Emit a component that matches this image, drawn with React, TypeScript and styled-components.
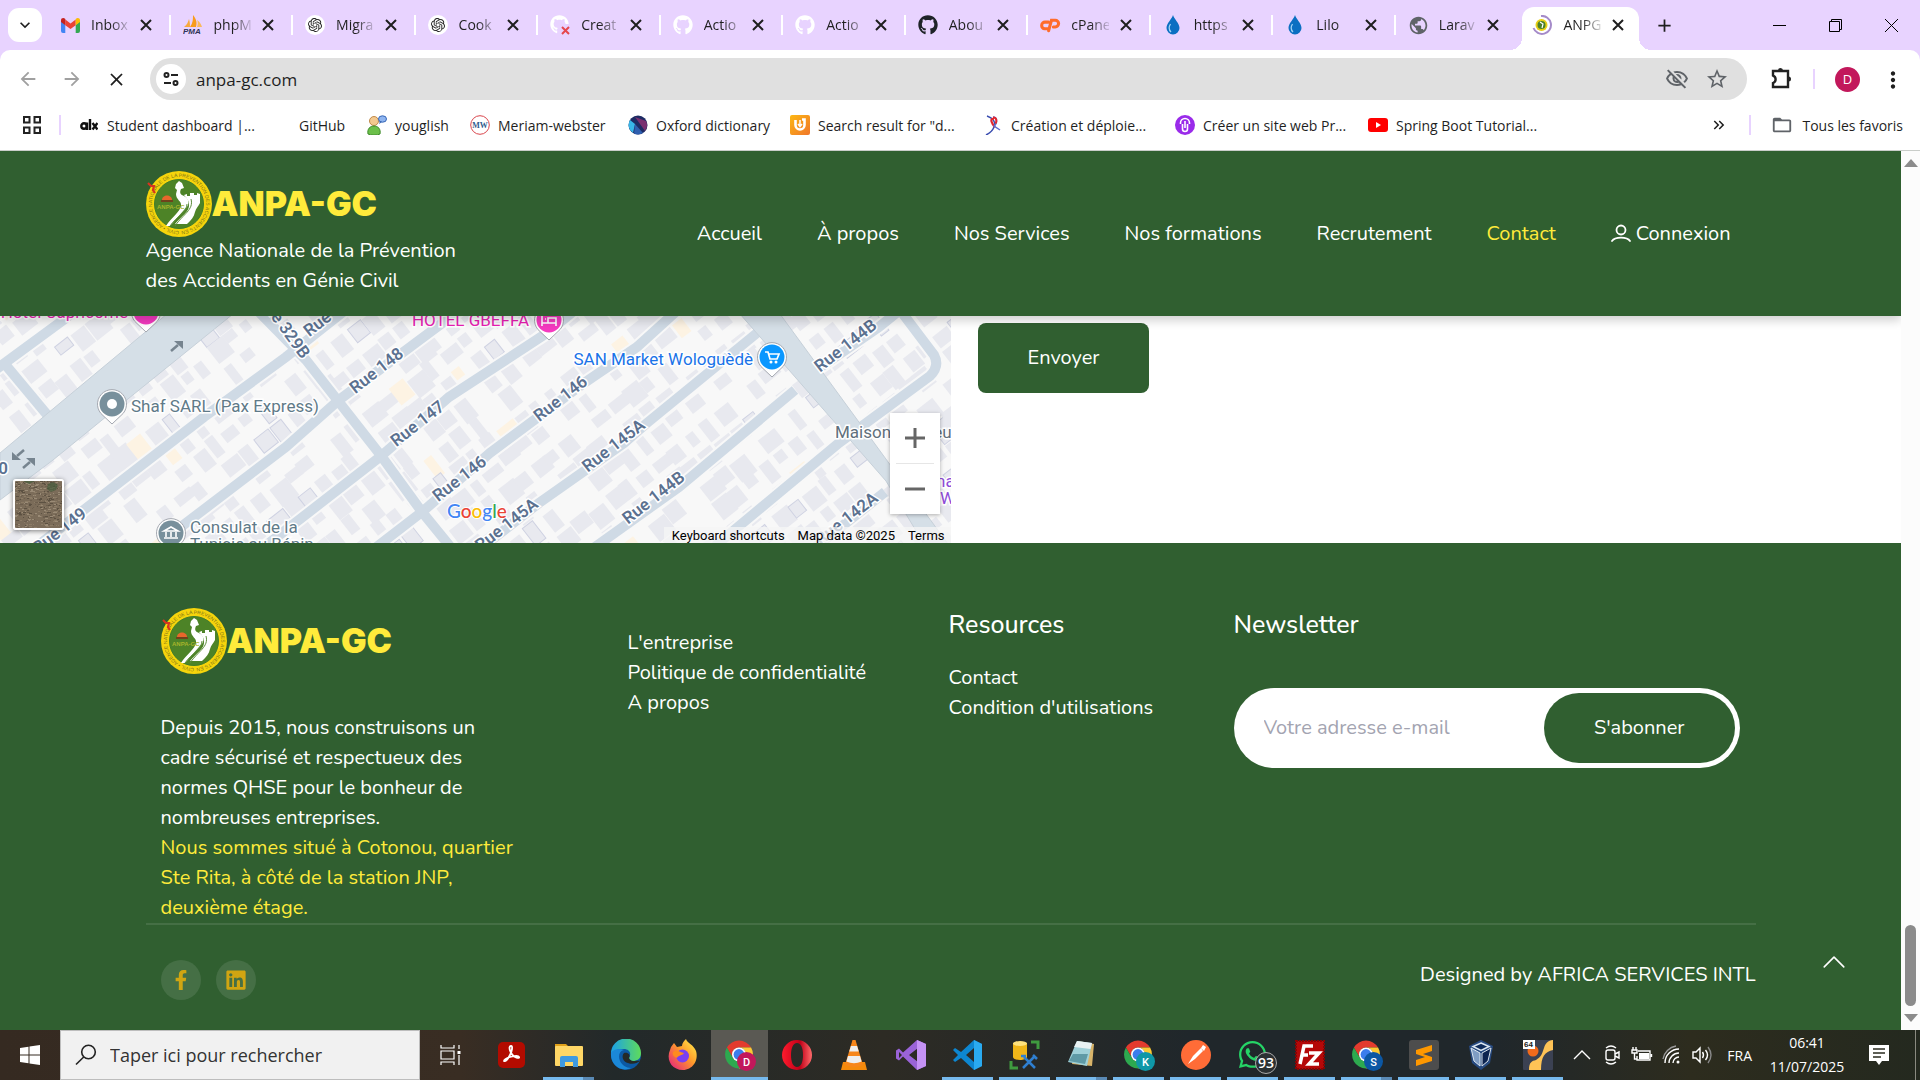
import React from "react";
import styled, { createGlobalStyle, css } from "styled-components";
import { FaGithub, FaFacebookF, FaLinkedin, FaWhatsapp } from "react-icons/fa";
import { SiOpenai } from "react-icons/si";
import { BsChevronUp } from "react-icons/bs";
import {
  MdClose,
  MdArrowBack,
  MdArrowForward,
  MdOutlineVisibilityOff,
  MdStarBorder,
  MdMoreVert,
  MdAdd,
  MdKeyboardArrowDown,
  MdPublic,
  MdFolderOpen,
  MdKeyboardDoubleArrowRight,
} from "react-icons/md";

const green = "#305f30";
const yellow = "#ffeb3b";
const lilac = "#e8d3ff";
const uiFont = `"Segoe UI", "Open Sans", "Noto Sans", sans-serif`;
const siteFont = `Nunito, Lato, "Open Sans", sans-serif`;

const GlobalStyle = createGlobalStyle`
  *, *::before, *::after { box-sizing: border-box; }
  body { margin: 0; background: #fff; }
  button, input { font: inherit; color: inherit; border: 0; background: none; padding: 0; margin: 0; }
  a { color: inherit; text-decoration: none; }
  ul { list-style: none; margin: 0; padding: 0; }
  p, h2 { margin: 0; }
  svg { display: block; flex: none; }
`;

const Screen = styled.div`
  display: flex;
  flex-direction: column;
  height: 100vh;
  overflow: hidden;
  font-family: ${uiFont};
  color: #1f1f1f;
`;

/* ---------- browser tabs ---------- */

const TabStrip = styled.div`
  display: flex;
  align-items: flex-end;
  height: 50px;
  padding-left: 8px;
  background: ${lilac};
`;

const TabSearch = styled.button`
  display: grid;
  flex: none;
  place-items: center;
  width: 34px;
  height: 34px;
  margin: 0 6px 8px 0;
  border-radius: 11px;
  background: #fff;
`;

const TabList = styled.div`
  display: flex;
  flex: 1;
  min-width: 0;
  height: 43px;
`;

const Tab = styled.div<{ $active?: boolean; $rule?: boolean }>`
  position: relative;
  display: flex;
  flex: 1 1 0;
  align-items: center;
  min-width: 0;
  padding: 0 18px 7px 12px;
  ${(p) =>
    p.$rule &&
    css`
      &::after {
        content: "";
        position: absolute;
        right: 0;
        top: 8px;
        width: 2px;
        height: 20px;
        background: #fff;
      }
    `}
  ${(p) =>
    p.$active &&
    css`
      margin: 0 4px;
      padding: 0 14px 7px 10px;
      border-radius: 12px 12px 0 0;
      background: #fff;
      &::before,
      &::after {
        content: "";
        position: absolute;
        bottom: 0;
        width: 12px;
        height: 12px;
      }
      &::before {
        left: -12px;
        background: radial-gradient(circle at 0 0, transparent 12px, #fff 12px);
      }
      &::after {
        right: -12px;
        background: radial-gradient(circle at 100% 0, transparent 12px, #fff 12px);
      }
    `}
`;

const TabTitle = styled.span`
  flex: 1;
  min-width: 0;
  margin: 0 10px 0 11px;
  font-size: 14px;
  line-height: 20px;
  white-space: nowrap;
  mask-image: linear-gradient(to right, #000 50%, rgba(0, 0, 0, 0.15));
`;

const IconButton = styled.button<{ $size?: number }>`
  display: grid;
  flex: none;
  place-items: center;
  width: ${(p) => p.$size ?? 14}px;
  height: ${(p) => p.$size ?? 14}px;
`;

const WindowButtons = styled.div`
  display: flex;
  flex: none;
  align-items: center;
  justify-content: space-between;
  width: 277px;
  height: 50px;
  padding: 0 22px 0 10px;
`;

const WindowGroup = styled.div`
  display: flex;
  gap: 42px;
`;

/* ---------- toolbar ---------- */

const Toolbar = styled.div`
  background: ${lilac};
`;

const ToolbarRow = styled.div`
  display: flex;
  align-items: center;
  height: 58px;
  padding: 0 16px;
  border-radius: 10px 10px 0 0;
  background: #fff;
`;

const NavButtons = styled.div`
  display: flex;
  gap: 20px;
  margin-right: 22px;
`;

const Omnibox = styled.div`
  display: flex;
  flex: 1;
  align-items: center;
  height: 42px;
  padding: 0 18px 0 6px;
  border-radius: 21px;
  background: #e0e0e0;
  color: #5f6368;
  gap: 16px;
`;

const SiteInfo = styled.button`
  display: grid;
  place-items: center;
  width: 30px;
  height: 30px;
  border-radius: 50%;
  background: #fff;
`;

const Address = styled.input`
  flex: 1;
  min-width: 0;
  margin-left: -6px;
  outline: 0;
  color: #1f1f1f;
  font-size: 17px;
`;

const ToolbarEnd = styled.div`
  display: flex;
  align-items: center;
  gap: 20px;
  margin-left: 22px;
`;

const Rule = styled.span`
  flex: none;
  width: 2px;
  height: 20px;
  background: ${lilac};
`;

const Avatar = styled.button`
  width: 25px;
  height: 25px;
  border-radius: 50%;
  background: #c2185b;
  color: #fff;
  font-size: 13px;
`;

const Bookmarks = styled.nav`
  display: flex;
  align-items: center;
  gap: 18px;
  height: 42px;
  padding: 0 17px 8px 23px;
  background: #fff;
  font-size: 14px;
  white-space: nowrap;
`;

const BookmarkList = styled.div`
  display: flex;
  flex: 1;
`;

const Bookmark = styled.a<{ $width: number }>`
  display: flex;
  align-items: center;
  gap: 8px;
  width: ${(p) => p.$width}px;
`;

const IconSlot = styled.span`
  display: grid;
  place-items: center;
  flex: none;
  width: 20px;
  height: 20px;
`;

const BookmarksEnd = styled.div`
  display: flex;
  align-items: center;
  gap: 20px;
`;

const AllBookmarks = styled.a`
  display: flex;
  align-items: center;
  gap: 9px;
`;

/* ---------- web page ---------- */

const Viewport = styled.div`
  display: flex;
  flex: 1;
  min-height: 0;
  border-top: 1px solid #c9cdc9;
`;

const Page = styled.div`
  display: flex;
  flex: 1;
  flex-direction: column;
  min-width: 0;
  overflow: hidden;
  background: #fff;
  font-family: ${siteFont};
  font-size: 20px;
  line-height: 30px;
`;

const Container = styled.div`
  width: min(1610px, 100% - 48px);
  margin: 0 auto;
`;

const SiteHeader = styled.header`
  position: relative;
  z-index: 1;
  padding: 20px 0;
  background: ${green};
  color: #fff;
  box-shadow: 0 4px 10px rgba(0, 0, 0, 0.2);
`;

const HeaderRow = styled(Container)`
  display: flex;
  align-items: center;
  justify-content: space-between;
`;

const LogoLink = styled.a`
  display: flex;
  align-items: center;
  height: 65px;
`;

const LogoText = styled.span`
  color: ${yellow};
  font-family: Inter, "Liberation Sans", sans-serif;
  font-size: 34px;
  font-weight: 900;
`;

const Menu = styled.ul`
  display: flex;
  gap: 55px;
  padding-right: 25px;
`;

const MenuLink = styled.a<{ $active?: boolean }>`
  display: flex;
  align-items: center;
  gap: 5px;
  color: ${(p) => (p.$active ? yellow : "#fff")};
`;

const Split = styled.main`
  display: grid;
  grid-template-columns: 1fr 1fr;
`;

const MapPane = styled.section`
  position: relative;
  height: 227px;
  overflow: hidden;
  background: #f8f8f8;
  font-family: Roboto, sans-serif;
`;

const ZoomBox = styled.div`
  position: absolute;
  right: 11px;
  top: 97px;
  display: flex;
  flex-direction: column;
  width: 50px;
  background: #fff;
  box-shadow: 0 1px 4px rgba(0, 0, 0, 0.3);
`;

const ZoomButton = styled.button`
  display: grid;
  place-items: center;
  height: 50px;
  color: #666;
  & + & {
    height: 51px;
    background: linear-gradient(#e6e6e6, #e6e6e6) center top / 38px 1px no-repeat;
  }
`;

const Satellite = styled.button`
  position: absolute;
  left: 13px;
  top: 163px;
  width: 51px;
  height: 51px;
  overflow: hidden;
  border: 2px solid #fff;
  border-radius: 3px;
  box-shadow: 0 1px 5px rgba(0, 0, 0, 0.5);
`;

const Attribution = styled.div`
  position: absolute;
  right: 0;
  bottom: 0;
  display: flex;
  gap: 13px;
  height: 16px;
  padding: 0 6px 0 8px;
  background: rgba(245, 245, 245, 0.75);
  color: #000;
  font-size: 13px;
  line-height: 17px;
`;

const FormPane = styled.form`
  padding: 7px 27px;
`;

const SolidButton = styled.button<{ $pill?: boolean }>`
  height: 70px;
  padding: 0 50px;
  border-radius: ${(p) => (p.$pill ? 35 : 8)}px;
  background: ${green};
  color: #fff;
`;

const Footer = styled.footer`
  flex: 1;
  padding-top: 65px;
  background: ${green};
  color: #fff;
`;

const FooterGrid = styled(Container)`
  display: grid;
  grid-template-columns: 467fr 321fr 285fr 506fr;
  padding: 0 16px 0 15px;
  border-bottom: 2px solid #456f45;
`;

const About = styled.div`
  max-width: 360px;
`;

const AboutText = styled.p`
  margin-top: 40px;
`;

const Highlight = styled.p`
  color: ${yellow};
`;

const LinkColumn = styled.ul<{ $top: number }>`
  padding-top: ${(p) => p.$top}px;
`;

const Heading = styled.h2`
  margin-top: 2px;
  font-size: 25px;
  font-weight: 500;
  line-height: 30px;
`;

const Subscribe = styled.form`
  display: flex;
  align-items: center;
  height: 80px;
  margin-top: 48px;
  padding: 0 5px 0 30px;
  border-radius: 40px;
  background: #fff;
`;

const EmailInput = styled.input`
  flex: 1;
  min-width: 0;
  outline: 0;
  color: #333;
  &::placeholder {
    color: #a3a4b1;
    opacity: 1;
  }
`;

const FooterEnd = styled(Container)`
  display: flex;
  justify-content: space-between;
  padding: 35px 0 0 15px;
`;

const Social = styled.div`
  display: flex;
  gap: 15px;
`;

const SocialLink = styled.a`
  display: grid;
  place-items: center;
  width: 40px;
  height: 40px;
  border-radius: 50%;
  background: #456f45;
  color: #d0a512;
`;

const BackToTop = styled.button`
  position: fixed;
  right: 73px;
  bottom: 105px;
  color: #fff;
`;

const ScrollTrack = styled.div`
  display: flex;
  flex-direction: column;
  align-items: center;
  justify-content: space-between;
  width: 19px;
  padding: 8px 0;
  background: #fcfcfc;
  color: #8b8b8b;
`;

const ScrollEnd = styled.div`
  display: flex;
  flex-direction: column;
  align-items: center;
  gap: 8px;
`;

const Thumb = styled.div`
  width: 11px;
  height: 81px;
  border-radius: 6px;
  background: #8b8b8b;
`;

/* ---------- taskbar ---------- */

const Taskbar = styled.div`
  display: flex;
  align-items: stretch;
  height: 50px;
  background: linear-gradient(90deg, #352a21 0%, #392d23 24%, #22292a 32%, #2d2b24 46%, #20272b 62%, #20272b 78%, #2d2c1e 88%, #24291f 100%);
  color: #fff;
`;

const StartButton = styled.button`
  display: grid;
  place-items: center;
  width: 60px;
`;

const SearchBox = styled.label`
  display: flex;
  align-items: center;
  gap: 13px;
  width: 360px;
  padding-left: 14px;
  border: 1px solid #bdbdbd;
  background: #f1f1f1;
  color: #222;
`;

const SearchInput = styled.input`
  width: 300px;
  outline: 0;
  font-size: 18px;
  &::placeholder {
    color: #333;
    opacity: 1;
  }
`;

const TaskView = styled.button`
  display: grid;
  place-items: center;
  width: 63px;
  padding-right: 3px;
`;

const Apps = styled.div`
  display: flex;
  flex: 1;
`;

const AppButton = styled.button<{ $active?: boolean; $open?: boolean; $many?: boolean }>`
  display: grid;
  place-items: center;
  width: 57px;
  background: ${(p) => (p.$active ? "#5a5953" : "transparent")};
  border-bottom: 3px solid transparent;
  border-top: 3px solid transparent;
  background-clip: border-box;
  ${(p) =>
    p.$open &&
    css`
      border-image: linear-gradient(
          90deg,
          transparent ${p.$active ? 0 : 10}%,
          #76b9ed ${p.$active ? 0 : 10}%,
          #76b9ed ${p.$many ? 72 : p.$active ? 100 : 90}%,
          ${p.$many ? "#5a8ab5" : "transparent"} ${p.$many ? 72 : p.$active ? 100 : 90}%,
          ${p.$many ? "#5a8ab5" : "transparent"} 90%,
          transparent ${p.$active ? 100 : 90}%
        )
        3;
      border-top-width: 0;
      padding-top: 3px;
    `}
`;

const Tray = styled.div`
  display: flex;
  align-items: center;
  font-size: 14px;
`;

const TrayIcons = styled.div`
  display: flex;
  align-items: center;
  gap: 8px;
  margin-right: 14px;
`;

const Language = styled.button`
  margin-right: 8px;
`;

const Clock = styled.time`
  width: 94px;
  line-height: 24px;
  text-align: center;
`;

const Notice = styled.button`
  display: grid;
  place-items: center;
  width: 50px;
  height: 50px;
  margin-right: 11px;
`;

const DesktopEdge = styled.span`
  width: 5px;
  height: 50px;
  border-left: 1px solid #8a8a80;
`;

/* ---------- small drawings ---------- */

const Gmail = () => (
  <svg width="19" height="15" viewBox="0 0 19 15">
    <path d="M0 2v11a2 2 0 0 0 2 2h2.300V7L0 3z" fill="#4285f4" />
    <path d="M19 2v11a2 2 0 0 1-2 2h-2.300V7L19 3z" fill="#34a853" />
    <path d="M4.300 1.500v5.700L9.500 11l5.200-3.800V1.500L9.500 5.400z" fill="#ea4335" />
    <path d="M0 2.500C0 0 2.500-.6 4.300.900v6.300L0 4z" fill="#c5221f" />
    <path d="M19 2.500C19 0 16.500-.6 14.700.900v6.300L19 4z" fill="#fbbc04" />
  </svg>
);

const PhpMyAdmin = () => (
  <svg width="20" height="20" viewBox="0 0 20 20">
    <path d="M1 12C4 10 5 7 6 4c1 4 1 5 1 8z" fill="#f7a93b" />
    <path d="M7 12C10 8 10 4 10 0c4 5 4 8 3 12z" fill="#f89c1c" />
    <path d="M14 12c1-3 1-5 0-7 3 2 4 4 5 7z" fill="#fbb95b" />
    <text x="0" y="19" fontSize="8" fontWeight="700" fontStyle="italic" fontFamily="Liberation Sans, sans-serif" fill="#2e3357">PMA</text>
  </svg>
);

const OpenAiBadge = () => (
  <svg width="20" height="20" viewBox="0 0 20 20">
    <circle cx="10" cy="10" r="10" fill="#fff" />
    <g transform="translate(3 3)"><SiOpenai size={14} color="#222" /></g>
  </svg>
);

const CPanel = () => (
  <svg width="21" height="16" viewBox="0 0 22 16" fill="none" stroke="#ff6c2c" strokeWidth="3.200" strokeLinecap="round">
    <path d="M9 5H5.500a3.500 3.500 0 0 0-.5 7H8" />
    <path d="M9 14L12 3h4a3.500 3.500 0 0 1 0 7h-2" />
  </svg>
);

const FailedGithub = () => (
  <svg width="20" height="20" viewBox="0 0 20 20">
    <FaGithub size={19} color="#fff" />
    <path d="M10 9h10v11H10z" fill={lilac} />
    <path d="M12 12l7 7M19 12l-7 7" stroke="#e5484d" strokeWidth="2" />
  </svg>
);

const Drop = () => (
  <svg width="14" height="20" viewBox="0 0 14 20">
    <path d="M7 0c1 4 6.500 8 6.500 13a6.500 6.500 0 0 1-13 0C.5 8 6 4 7 0z" fill="#0b6fc2" />
    <path d="M4.500 9C2.500 12 3 15 5 17" fill="none" stroke="#9fd2f5" strokeWidth="1.300" />
  </svg>
);

const Seal = () => (
  <svg width="66" height="66" viewBox="0 0 66 66">
    <defs>
      <path id="sealRing" d="M33 60A27 27 0 1 1 33.100 60" />
    </defs>
    <circle cx="33" cy="33" r="33" fill="#f6d40c" />
    <circle cx="33" cy="33" r="24.500" fill="#4d8327" stroke="#3f7d2a" strokeWidth="1" />
    <text fontSize="5" fontFamily="Liberation Sans, sans-serif" fill="#7d7419">
      <textPath href="#sealRing">CIVIL • AGENCE NATIONALE DE LA PREVENTION DES ACCIDENTS EN GENIE</textPath>
    </text>
    <path d="M29 17l1-4 3-3 3 2 2 5-3 1c-2 4 0 6 3 7 6 3 6 9 0 14L24 55h-4c5-8 14-14 15-20 1-5-5-6-5-12l1-4z" fill="#fff" />
    <path d="M38 24l3-1v2h3v-3h4v2h3v-2l3 1v9c-2 4-4 5-5 9-1 5-4 8-8 12H29c6-8 15-12 14-20 0-4-3-6-5-9z" fill="#fff" />
    <path d="M45 28c3 11-8 15-16 27M41 33c0 8-11 13-17 22" fill="none" stroke="#5c8d3b" strokeWidth="1" />
    <path d="M16 29c0-6 10-6 10 0z" fill="#e8672b" />
    <path d="M15 30h12" stroke="#7b2e19" strokeWidth="1.500" />
    <text x="11" y="38" fontSize="6" fontWeight="700" fontFamily="Liberation Sans, sans-serif" fill="#a6b32b">ANPA-GC</text>
    <path d="M2 12l3 3 3 0-1 4 2 3M5 15l3 0" fill="none" stroke="#d9331f" strokeWidth="2.200" />
  </svg>
);

const SiteLoader = () => (
  <svg width="20" height="20" viewBox="0 0 20 20">
    <path d="M9 1a9 9 0 1 1-7.500 12" fill="none" stroke="#a58bc9" strokeWidth="2" />
    <circle cx="9.500" cy="10" r="6" fill="#e8cf16" />
    <circle cx="9.500" cy="10" r="4" fill="#4c7f2a" />
    <path d="M8 7l3 2-1 4" fill="none" stroke="#fff" strokeWidth="1.200" />
  </svg>
);

const Person = () => (
  <svg width="20" height="20" viewBox="0 0 20 20" fill="none" stroke="currentColor" strokeWidth="1.800" strokeLinecap="round">
    <circle cx="10" cy="6" r="4.500" />
    <path d="M1 17C4 12.500 16 12.500 19 17" />
  </svg>
);

const Puzzle = () => (
  <svg width="24" height="24" viewBox="0 0 24 24" fill="none" stroke="#222" strokeWidth="2.400">
    <path d="M4 4H19V20H4V16A4 4 0 0 0 4 8.500Z" />
    <path d="M9 3.500a2.500 2.500 0 0 1 5 0zM19.500 9.500a2.500 2.500 0 0 1 0 5z" fill="#222" stroke="none" />
  </svg>
);

const Tune = () => (
  <svg width="16" height="16" viewBox="0 0 16 16" fill="none" stroke="#222" strokeWidth="2">
    <circle cx="3.500" cy="4" r="2" />
    <path d="M8 4h7M1 12h7" />
    <circle cx="12.500" cy="12" r="2" />
  </svg>
);

const AppsGrid = () => (
  <svg width="18" height="18" viewBox="0 0 18 18" fill="none" stroke="#222" strokeWidth="2">
    <path d="M1 1h5.500v5.500H1zM11.500 1H17v5.500h-5.500zM1 11.500h5.500V17H1zM11.500 11.500H17V17h-5.500z" />
  </svg>
);

const CloseTab = () => (
  <svg width="12" height="12" viewBox="0 0 12 12"><path d="M1 1l10 10M11 1L1 11" stroke="#1f1f1f" strokeWidth="2" /></svg>
);
const Minimize = () => (
  <svg width="13" height="13" viewBox="0 0 13 13"><path d="M0 6.500h13" stroke="#000" /></svg>
);
const Restore = () => (
  <svg width="13" height="13" viewBox="0 0 13 13" fill="none" stroke="#000">
    <path d="M.5 2.500h10v10H.5zM2.500 2.500V.5h10v10h-2" />
  </svg>
);
const CloseWindow = () => (
  <svg width="13" height="13" viewBox="0 0 13 13"><path d="M0 0l13 13M13 0L0 13" stroke="#000" /></svg>
);

const Alx = () => (
  <svg width="18" height="12" viewBox="0 0 18 12" fill="none" stroke="#111" strokeWidth="2.400">
    <circle cx="4" cy="7" r="2.700" />
    <path d="M7 3.500V11M10 0v11M12.500 4l5 6.500M17.500 4l-5 6.500" />
  </svg>
);
const Youglish = () => (
  <svg width="20" height="20" viewBox="0 0 20 20">
    <circle cx="7" cy="6" r="4.500" fill="#f3c98f" stroke="#c08a4b" />
    <path d="M1 19c-1-5 2-8 6-8s7 3 6 8c-3 1.500-9 1.500-12 0z" fill="#6cc04a" stroke="#3f8a2c" />
    <ellipse cx="15.500" cy="4" rx="4" ry="3.200" fill="#8fb5f0" stroke="#3867b5" />
    <path d="M13 6l-1 3 3-2z" fill="#3867b5" />
  </svg>
);
const Webster = () => (
  <svg width="20" height="20" viewBox="0 0 20 20">
    <circle cx="10" cy="10" r="9.300" fill="#fff" stroke="#d9454c" />
    <text x="10" y="13" textAnchor="middle" fontSize="8" fontWeight="700" fontFamily="Liberation Serif, serif" fill="#2f5b8c">MW</text>
  </svg>
);
const Oxford = () => (
  <svg width="20" height="20" viewBox="0 0 20 20">
    <circle cx="10" cy="10" r="9.500" fill="#1d2b63" />
    <path d="M2 5a9.500 9.500 0 0 0 3 13L7 9z" fill="#38b6e8" />
    <path d="M7 2l11 4a9.500 9.500 0 0 1-1 10z" fill="#7a2f70" />
    <path d="M7 9l8 9a9.500 9.500 0 0 1-9 .5z" fill="#2f5fb0" />
  </svg>
);
const SearchResult = () => (
  <svg width="20" height="20" viewBox="0 0 20 20">
    <defs><linearGradient id="srg" x1="0" y1="0" x2="1" y2="1"><stop offset="0" stopColor="#fdb813" /><stop offset="1" stopColor="#f0762a" /></linearGradient></defs>
    <rect width="20" height="20" rx="2" fill="url(#srg)" />
    <path d="M5.500 5v5a4.500 4.500 0 0 0 9 0V4.500h-2.500" fill="none" stroke="#fff" strokeWidth="2.600" />
    <path d="M10 5v6M8 9l2 2.500L12 9" fill="none" stroke="#fff" strokeWidth="1.500" />
  </svg>
);
const Ribbon = () => (
  <svg width="16" height="20" viewBox="0 0 16 20">
    <path d="M2 1C8 3 11 7 9 12C8 15 5 18 1 20" fill="none" stroke="#3a4db0" strokeWidth="1.500" />
    <path d="M9 4C4 3 7 9 10 12" fill="none" stroke="#e3262e" strokeWidth="2.200" />
    <path d="M8 2c5 0 4 7 1 9l6 4" fill="none" stroke="#5a6bd0" strokeWidth="1.500" />
    <path d="M8 2.500c4 0 4 4 2.500 6" fill="none" stroke="#e3262e" strokeWidth="2" />
  </svg>
);
const Purple = () => (
  <svg width="20" height="20" viewBox="0 0 20 20">
    <circle cx="10" cy="10" r="10" fill="#9a2bea" />
    <path d="M5.500 9V8a4.500 4.500 0 0 1 9 0v1M7.500 9v5a2.500 2.500 0 0 0 5 0V9M10 6v7" fill="none" stroke="#fff" strokeWidth="1.600" />
  </svg>
);
const Youtube = () => (
  <svg width="20" height="14" viewBox="0 0 20 14">
    <rect width="20" height="14" rx="3" fill="#f00" />
    <path d="M8 4l5 3-5 3z" fill="#fff" />
  </svg>
);

/* ---------- map ---------- */

function makeRandom(start: number) {
  let seed = start;
  return () => {
    seed = (seed * 1103515245 + 12345) % 2147483648;
    return seed / 2147483648;
  };
}

type Building = { x: number; y: number; w: number; h: number; t: number };

function makeBuildings(): Building[] {
  const rnd = makeRandom(41);
  const list: Building[] = [];
  for (let v = -40; v < 820; v += 24) {
    for (let u = -200; u < 800; u += 20) {
      if (rnd() < 0.17) continue;
      list.push({ x: u + rnd() * 6, y: v + rnd() * 7, w: 9 + rnd() * 12, h: 10 + rnd() * 13, t: rnd() });
    }
  }
  return list;
}
const buildings = makeBuildings();

const roads = [
  "M-6 55L66 2L80-10",
  "M4 47L49 101",
  "M32 234L204 101L286 41L348-8",
  "M165 223L286 131L339 84L433 14L460-6",
  "M255 238L380 141L449 81L547 17L575-6",
  "M370 236L422 196L490 137L584 67L637 31L680-8",
  "M476 236L539 187L624 127L647 107L757 17",
  "M588 236L679 171L795 74",
  "M805 62L879 11L905-10",
  "M715 230L839 127L930 60Q940 50 934 39L900-6",
  "M812 234L885 176",
  "M255-8L306 44L382 141L422 196L453 234",
];

const streets: [string, number, number, number][] = [
  ["Rue 329B", 280, 14, 54],
  ["Rue 148", 334, 2, -38],
  ["Rue 148", 380, 59, -38],
  ["Rue 147", 421, 112, -38],
  ["Rue 146", 564, 87, -38],
  ["Rue 146", 463, 167, -38],
  ["Rue 145A", 617, 134, -38],
  ["Rue 145A", 510, 213, -38],
  ["Rue 144B", 657, 186, -38],
  ["Rue 144B", 849, 34, -38],
  ["Rue 142A", 850, 207, -38],
  ["Rue 149", 63, 219, -38],
];

const StreetLabel = styled.text`
  fill: #5b7190;
  stroke: #fff;
  stroke-width: 3px;
  paint-order: stroke;
  font-size: 17px;
  font-weight: 600;
  text-anchor: middle;
`;

const PlaceLabel = styled.text<{ $color: string }>`
  fill: ${(p) => p.$color};
  stroke: #fff;
  stroke-width: 3px;
  paint-order: stroke;
  font-size: 17px;
`;

const Pin = ({ x, y, color, children }: { x: number; y: number; color: string; children?: React.ReactNode }) => (
  <g transform={`translate(${x} ${y})`}>
    <path d="M0 20L-9 11.500A14.500 14.500 0 1 1 9 11.500Z" fill="#fff" stroke="#a4a8b0" strokeWidth="1" />
    <circle r="12.500" fill={color} />
    {children}
  </g>
);

const MapArrow = ({ x, y, flip }: { x: number; y: number; flip?: boolean }) => (
  <g transform={`translate(${x} ${y}) rotate(${flip ? 180 : 0})`} fill="#76848f">
    <path d="M-6 5L1-1" stroke="#76848f" strokeWidth="2.500" />
    <path d="M-3-5H6V3Z" />
  </g>
);

const CityMap = () => (
  <svg width="100%" height="227" viewBox="0 0 951 227" preserveAspectRatio="xMinYMin slice" role="img" aria-label="Carte de Cotonou">
    <rect width="1200" height="227" fill="#f8f8f8" />
    <g transform="rotate(-38)">
      {buildings.map((b, i) => (
        <rect
          key={i}
          x={b.x}
          y={b.y}
          width={b.w}
          height={b.h}
          fill={b.t > 0.97 ? "#fdf3e3" : "#e8e9ef"}
          stroke={b.t < 0.06 ? "#cfd2e2" : "none"}
        />
      ))}
    </g>
    <g fill="none" stroke="#f8f8f8" strokeWidth="14">{roads.map((d) => <path key={d} d={d} />)}</g>
    <g fill="none" stroke="#cfdae5" strokeWidth="10">{roads.map((d) => <path key={d} d={d} />)}</g>
    <path d="M167-2L0 137V184L53 144L118 91L233-2Z" fill="#d5dfe7" stroke="#c6d0d9" />
    <path d="M740-2H780L948 228H924L886 165Z" fill="#d5dfe7" stroke="#c6d0d9" />
    <MapArrow x={177} y={30} />
    <MapArrow x={18} y={139} flip />
    <MapArrow x={29} y={147} />
    {streets.map(([name, x, y, angle], i) => (
      <StreetLabel key={i} transform={`translate(${x} ${y}) rotate(${angle})`}>{name}</StreetLabel>
    ))}
    <StreetLabel x="3" y="158">0</StreetLabel>
    <PlaceLabel $color="#e91eb4" x="128" y="2" textAnchor="end">Hotel Capricorne</PlaceLabel>
    <Pin x={146} y={-4} color="#f53ac0" />
    <PlaceLabel $color="#e91eb4" x="529" y="10" textAnchor="end">HOTEL GBEFFA</PlaceLabel>
    <Pin x={549} y={4} color="#f53ac0">
      <path d="M-7-5V6M-7 3H7V6M7 3V-2H-1V3M-4-1h1" stroke="#fff" strokeWidth="1.600" fill="none" />
    </Pin>
    <PlaceLabel $color="#1a73e8" x="753" y="49" textAnchor="end">SAN Market Wologuèdè</PlaceLabel>
    <Pin x={772} y={41} color="#0a97ff">
      <path d="M-7-5h3l2 7h7l2-5H-3" stroke="#fff" strokeWidth="1.700" fill="none" />
      <circle cx="-1" cy="5" r="1.500" fill="#fff" />
      <circle cx="4" cy="5" r="1.500" fill="#fff" />
    </Pin>
    <PlaceLabel $color="#5f7a88" x="131" y="96">Shaf SARL (Pax Express)</PlaceLabel>
    <Pin x={112} y={88} color="#78909c"><circle r="5" fill="#fff" /></Pin>
    <PlaceLabel $color="#5f7a88" x="190" y="217">Consulat de la</PlaceLabel>
    <PlaceLabel $color="#5f7a88" x="190" y="234">Tunisie au Bénin</PlaceLabel>
    <Pin x={171} y={217} color="#78909c">
      <path d="M-7-2L0-6L7-2ZM-7 5H7M-5-1V4M0-1V4M5-1V4" stroke="#fff" strokeWidth="1.600" fill="none" />
    </Pin>
    <PlaceLabel $color="#5f6f7c" x="835" y="122">Maison du Bleu</PlaceLabel>
    <PlaceLabel $color="#8e4bd8" x="936" y="171">na</PlaceLabel>
    <PlaceLabel $color="#8e4bd8" x="940" y="188">W</PlaceLabel>
    <text x="447" y="202" fontSize="19" fontWeight="500" fontFamily="Lato, sans-serif" stroke="#fff" strokeWidth="2" paintOrder="stroke">
      <tspan fill="#4285f4">G</tspan><tspan fill="#ea4335">o</tspan><tspan fill="#fbbc04">o</tspan><tspan fill="#4285f4">g</tspan><tspan fill="#34a853">l</tspan><tspan fill="#ea4335">e</tspan>
    </text>
  </svg>
);

function makeSoil() {
  const rnd = makeRandom(7);
  const tones = ["#6d5f4e", "#9a8b76", "#7d6e5b", "#5c5142", "#8c7c66"];
  return Array.from({ length: 520 }, () => ({
    x: Math.floor(rnd() * 47),
    y: Math.floor(rnd() * 47),
    w: 1 + Math.floor(rnd() * 3),
    fill: tones[Math.floor(rnd() * tones.length)],
  }));
}
const soil = makeSoil();

const Ground = () => (
  <svg width="47" height="47" viewBox="0 0 47 47">
    <rect width="47" height="47" fill="#7b6c59" />
    {soil.map((s, i) => <rect key={i} x={s.x} y={s.y} width={s.w} height="1" fill={s.fill} />)}
    <path d="M33 3l5-2 5 3-2 5-5 2-4-3zM8 0h12l-6 3z" fill="#435a3a" opacity=".7" />
  </svg>
);

/* ---------- taskbar drawings ---------- */

const Glyph = ({ children }: { children: React.ReactNode }) => (
  <svg width="32" height="32" viewBox="0 0 32 32">{children}</svg>
);

const Chrome = ({ badge, color }: { badge: string; color: string }) => (
  <Glyph>
    <path d="M2.900 8.500A14 14 0 0 1 27.100 8.500H15A7 7 0 0 0 8.940 19Z" fill="#e33b2e" />
    <path d="M27.100 8.500A14 14 0 0 1 15 29.500L21.060 19A7 7 0 0 0 15 8.500Z" fill="#fcc934" />
    <path d="M2.900 8.500A14 14 0 0 0 15 29.500L21.060 19A7 7 0 0 1 8.940 19Z" fill="#2da94f" />
    <circle cx="15" cy="15.500" r="7" fill="#fff" />
    <circle cx="15" cy="15.500" r="5.400" fill="#3b7ded" />
    <circle cx="22.500" cy="22.500" r="9.500" fill={color} />
    <text x="22.500" y="26.500" textAnchor="middle" fontSize="11" fontFamily="Roboto, sans-serif" fontWeight="500" fill="#fff">{badge}</text>
  </Glyph>
);

const Acrobat = () => (
  <Glyph>
    <rect x="2" y="3" width="27" height="26" rx="5" fill="#b30b00" />
    <path d="M8 22c0-3 14-7 15-4 1 2-5 1-8-4-2-4-2-7 0-7s1 5-1 9-4 7-6 6z" fill="none" stroke="#fff" strokeWidth="1.800" />
  </Glyph>
);
const Explorer = () => (
  <Glyph>
    <path d="M2 5h11l3 3H2z" fill="#e0a11b" />
    <rect x="2" y="7" width="28" height="20" rx="1" fill="#ffd766" />
    <path d="M7 28V19a2 2 0 0 1 2-2h14a2 2 0 0 1 2 2v9h-5v-5h-8v5z" fill="#3f9ae0" />
  </Glyph>
);
const Edge = () => (
  <Glyph>
    <defs><linearGradient id="edg" x1="0" y1="0" x2="1" y2="0"><stop offset="0" stopColor="#1aa0e8" /><stop offset="1" stopColor="#5fdc5a" /></linearGradient></defs>
    <circle cx="16" cy="16" r="15" fill="#0c59a4" />
    <path d="M1 15A15 15 0 0 1 31 14c0 6-4 8-8 8-3 0-5-1-4-3 3-5 0-9-5-9C8 10 2 12 1 15z" fill="url(#edg)" />
    <path d="M1 14c2-4 9-5 13-3-5 1-6 6-4 11 2 4 6 7 11 7C10 34 0 25 1 14z" fill="#1b88d8" />
    <path d="M14 14c-3 3-1 9 4 10 5 2 9 0 12-2-2-1-9 2-11-3 2-3-1-6-5-5z" fill="#252a28" />
  </Glyph>
);
const Firefox = () => (
  <Glyph>
    <defs><linearGradient id="ffx" x1="1" y1="0" x2="0" y2="1"><stop offset="0" stopColor="#fff44f" /><stop offset=".45" stopColor="#ff9a2a" /><stop offset="1" stopColor="#e31587" /></linearGradient></defs>
    <path d="M4 8l3-4 3 4 5-1c0-3 2-5 4-7 1 4 8 6 10 12 3 10-4 19-13 19C6 31 0 23 2 14z" fill="url(#ffx)" />
    <circle cx="15.500" cy="17" r="6.500" fill="#7b3ff2" />
    <path d="M6 13c4-3 7 0 11 1-2 3-6 2-7 5-3-1-5-3-4-6z" fill="#ff8a1f" />
  </Glyph>
);
const Opera = () => (
  <Glyph>
    <defs><linearGradient id="opr" x1="0" y1="0" x2="1" y2="0"><stop offset="0" stopColor="#ff1b2d" /><stop offset=".6" stopColor="#c00018" /><stop offset="1" stopColor="#ff6b6b" /></linearGradient></defs>
    <path fillRule="evenodd" d="M16 1a15 15 0 1 0 0 30a15 15 0 1 0 0-30zM16 4c4 0 6 5 6 12s-2 12-6 12-6-5-6-12 2-12 6-12z" fill="url(#opr)" />
  </Glyph>
);
const Vlc = () => (
  <Glyph>
    <path d="M5 23h22l2 8H3z" fill="#f58a0b" />
    <path d="M14.500 1h3L25 26q-9 4-18 0z" fill="#f7861a" />
    <path d="M12.900 7h6.200l1.700 5.500h-9.600zM10 17h12l1.600 5.500Q16 26 8.400 22.500z" fill="#eee" />
  </Glyph>
);
const VisualStudio = () => (
  <Glyph>
    <path d="M22 1l9 4v22l-9 4L8 17.500l-4 4-3-2v-8l3-2 4 4zM23 9l-9 7 9 7zM4 13v6l3-3z" fillRule="evenodd" fill="#9a63d8" />
    <path d="M22 1l9 4v22l-9 4z" fill="#c592f5" />
  </Glyph>
);
const VsCode = () => (
  <Glyph>
    <path d="M22 1l8 4v22l-8 4L9 19l-6 4-2-2 5-5-5-5 2-2 6 4zM22 9l-8 7 8 7z" fillRule="evenodd" fill="#0d86d0" />
    <path d="M22 1l8 4v22l-8 4z" fill="#2aaaf0" />
  </Glyph>
);
const SqlTools = () => (
  <Glyph>
    <path d="M4 4v14c0 4 14 4 14 0V4z" fill="#f0b619" />
    <ellipse cx="11" cy="4.500" rx="7" ry="2.500" fill="#ffe27d" />
    <path d="M22 3h7v7M2 22v7h7" fill="none" stroke="#3f9a3f" strokeWidth="3" />
    <path d="M15 18l11 11M26 17L14 29M12 17h5M24 16l4 4" stroke="#2f7fd0" strokeWidth="2.500" />
  </Glyph>
);
const Notepad = () => (
  <Glyph>
    <path d="M12 2l16 3-2 22-20-2z" fill="#d8b46a" />
    <path d="M11 2l15 2-5 23L2 23z" fill="#9fd0d8" />
    <path d="M11 2l15 2-1.500 6L8 8z" fill="#e9f2f3" />
    <path d="M7 15l15 0-3 10L3 22z" fill="#5f9aa6" />
  </Glyph>
);
const Postman = () => (
  <Glyph>
    <circle cx="16" cy="16" r="15" fill="#ff6c37" />
    <path d="M8 25l5-8 8-8 2 3-8 8zM21 9l2-3 3 2-2 4z" fill="#fff" />
  </Glyph>
);
const WhatsApp = () => (
  <svg width="48" height="38" viewBox="0 0 48 38">
    <g transform="translate(8 3)"><FaWhatsapp size={31} color="#25d366" /></g>
    <circle cx="37" cy="27" r="10.500" fill="#2b3033" stroke="#aaa" />
    <text x="37" y="32" textAnchor="middle" fontSize="14" fontWeight="600" fontFamily="Open Sans, sans-serif" fill="#fff">93</text>
  </svg>
);
const FileZilla = () => (
  <Glyph>
    <rect x="2" y="2" width="28" height="28" fill="#b50808" stroke="#8a0404" strokeWidth="2" strokeDasharray="2 1" />
    <path d="M6 25L10 7H19M8 16H14M15 14H25L15 25H25" fill="none" stroke="#fff" strokeWidth="3.500" />
  </Glyph>
);
const Sublime = () => (
  <Glyph>
    <rect x="1" y="1" width="30" height="30" rx="3" fill="#4d4d4d" />
    <path d="M8 11l16-5v6l-9 3 9 3v4L8 27v-6l9-3-9-3z" fill="#ff9800" />
  </Glyph>
);
const VirtualBox = () => (
  <Glyph>
    <path d="M16 1l12 6-3 17-9 7-9-7L4 7z" fill="#274a80" />
    <path d="M16 4l8 3.500-8 4-8-4z" fill="#0f2c5c" stroke="#dbe6f0" strokeWidth="1.500" />
    <path d="M6 9l9 5v13l-6-5z" fill="#7f9dc4" stroke="#dbe6f0" />
    <path d="M26 9l-9 5v13l6-5z" fill="#0c2350" stroke="#d6dfe9" />
  </Glyph>
);
const Tool64 = () => (
  <Glyph>
    <rect x="1" y="1" width="30" height="30" rx="1" fill="#3b4152" />
    <path d="M31 1v10c-8 2-12 6-12 20H7c0-8 3-9 7-10 5-3 6-6 8-12 1-4 4-8 9-8z" fill="#ffc356" />
    <circle cx="11" cy="12" r="5.500" fill="#f26a1b" />
    <rect x="1" y="1" width="12" height="9" fill="#fff" />
    <text x="2" y="8" fontSize="8" fontWeight="700" fontFamily="Liberation Sans, sans-serif" fill="#222">64</text>
  </Glyph>
);

/* ---------- data ---------- */

const tabs: { title: string; icon: React.ReactNode; rule?: boolean; active?: boolean }[] = [
  { title: "Inbox", icon: <Gmail />, rule: true },
  { title: "phpM", icon: <PhpMyAdmin />, rule: true },
  { title: "Migra", icon: <OpenAiBadge />, rule: true },
  { title: "Cook", icon: <OpenAiBadge />, rule: true },
  { title: "Creat", icon: <FailedGithub />, rule: true },
  { title: "Actio", icon: <FaGithub size={20} color="#fff" />, rule: true },
  { title: "Actio", icon: <FaGithub size={20} color="#fff" />, rule: true },
  { title: "Abou", icon: <FaGithub size={20} color="#1f2328" />, rule: true },
  { title: "cPane", icon: <CPanel />, rule: true },
  { title: "https", icon: <Drop />, rule: true },
  { title: "Lilo", icon: <Drop />, rule: true },
  { title: "Larav", icon: <MdPublic size={21} color="#5f6368" /> },
  { title: "ANPG", icon: <SiteLoader />, active: true },
];

const bookmarks: [string, number, React.ReactNode][] = [
  ["Student dashboard |...", 192, <Alx />],
  ["GitHub", 96, null],
  ["youglish", 103, <Youglish />],
  ["Meriam-webster", 158, <Webster />],
  ["Oxford dictionary", 162, <Oxford />],
  ['Search result for "d...', 193, <SearchResult />],
  ["Création et déploie...", 192, <Ribbon />],
  ["Créer un site web Pr...", 193, <Purple />],
  ["Spring Boot Tutorial...", 193, <Youtube />],
];

const menu = ["Accueil", "À propos", "Nos Services", "Nos formations", "Recrutement", "Contact"];

const apps: { name: string; icon: React.ReactNode; open?: boolean; many?: boolean; active?: boolean }[] = [
  { name: "Acrobat", icon: <Acrobat /> },
  { name: "Explorateur", icon: <Explorer />, open: true, many: true },
  { name: "Edge", icon: <Edge /> },
  { name: "Firefox", icon: <Firefox /> },
  { name: "Chrome D", icon: <Chrome badge="D" color="#c2185b" />, open: true, active: true },
  { name: "Opera", icon: <Opera /> },
  { name: "VLC", icon: <Vlc /> },
  { name: "Visual Studio", icon: <VisualStudio /> },
  { name: "VS Code", icon: <VsCode />, open: true },
  { name: "SQL Server", icon: <SqlTools />, open: true },
  { name: "Bloc-notes", icon: <Notepad />, open: true, many: true },
  { name: "Chrome K", icon: <Chrome badge="K" color="#0f97a7" />, open: true },
  { name: "Postman", icon: <Postman />, open: true },
  { name: "WhatsApp", icon: <WhatsApp />, open: true },
  { name: "FileZilla", icon: <FileZilla />, open: true },
  { name: "Chrome S", icon: <Chrome badge="S" color="#0b57a4" />, open: true, many: true },
  { name: "Sublime Text", icon: <Sublime />, open: true },
  { name: "VirtualBox", icon: <VirtualBox />, open: true },
  { name: "Outil 64", icon: <Tool64 />, open: true },
];

const Logo = () => (
  <LogoLink href="#">
    <Seal />
    <LogoText>ANPA-GC</LogoText>
  </LogoLink>
);

export default function App() {
  return (
    <Screen>
      <GlobalStyle />
      <TabStrip>
        <TabSearch aria-label="Rechercher des onglets"><MdKeyboardArrowDown size={20} /></TabSearch>
        <TabList>
          {tabs.map((t, i) => (
            <Tab key={i} $active={t.active} $rule={t.rule}>
              <IconSlot>{t.icon}</IconSlot>
              <TabTitle>{t.title}</TabTitle>
              <IconButton aria-label={`Fermer ${t.title}`}><CloseTab /></IconButton>
            </Tab>
          ))}
        </TabList>
        <WindowButtons>
          <IconButton $size={22} aria-label="Nouvel onglet"><MdAdd size={21} /></IconButton>
          <WindowGroup>
            <IconButton aria-label="Réduire"><Minimize /></IconButton>
            <IconButton aria-label="Restaurer"><Restore /></IconButton>
            <IconButton aria-label="Fermer"><CloseWindow /></IconButton>
          </WindowGroup>
        </WindowButtons>
      </TabStrip>

      <Toolbar>
        <ToolbarRow>
          <NavButtons>
            <IconButton $size={24} aria-label="Précédent"><MdArrowBack size={22} color="#a0a0a0" /></IconButton>
            <IconButton $size={24} aria-label="Suivant"><MdArrowForward size={22} color="#a0a0a0" /></IconButton>
            <IconButton $size={24} aria-label="Arrêter"><MdClose size={21} /></IconButton>
          </NavButtons>
          <Omnibox>
            <SiteInfo aria-label="Informations sur le site"><Tune /></SiteInfo>
            <Address aria-label="Adresse" defaultValue="anpa-gc.com" />
            <IconButton $size={24} aria-label="Cookies tiers bloqués"><MdOutlineVisibilityOff size={24} /></IconButton>
            <IconButton $size={24} aria-label="Ajouter aux favoris"><MdStarBorder size={24} /></IconButton>
          </Omnibox>
          <ToolbarEnd>
            <IconButton $size={24} aria-label="Extensions"><Puzzle /></IconButton>
            <Rule />
            <Avatar aria-label="Profil">D</Avatar>
            <IconButton $size={24} aria-label="Menu"><MdMoreVert size={26} /></IconButton>
          </ToolbarEnd>
        </ToolbarRow>
        <Bookmarks>
          <IconButton $size={18} aria-label="Applications"><AppsGrid /></IconButton>
          <Rule />
          <BookmarkList>
            {bookmarks.map(([label, width, icon]) => (
              <Bookmark key={label} href="#" $width={width}>
                <IconSlot>{icon}</IconSlot>
                {label}
              </Bookmark>
            ))}
          </BookmarkList>
          <BookmarksEnd>
            <IconButton $size={20} aria-label="Plus de favoris"><MdKeyboardDoubleArrowRight size={18} /></IconButton>
            <Rule />
            <AllBookmarks href="#"><MdFolderOpen size={22} color="#5f6368" />Tous les favoris</AllBookmarks>
          </BookmarksEnd>
        </Bookmarks>
      </Toolbar>

      <Viewport>
        <Page>
          <SiteHeader>
            <HeaderRow>
              <div>
                <Logo />
                <p>Agence Nationale de la Prévention<br />des Accidents en Génie Civil</p>
              </div>
              <nav>
                <Menu>
                  {menu.map((m) => (
                    <li key={m}><MenuLink href="#" $active={m === "Contact"}>{m}</MenuLink></li>
                  ))}
                  <li><MenuLink href="#"><Person />Connexion</MenuLink></li>
                </Menu>
              </nav>
            </HeaderRow>
          </SiteHeader>

          <Split>
            <MapPane>
              <CityMap />
              <Satellite aria-label="Vue satellite"><Ground /></Satellite>
              <ZoomBox>
                <ZoomButton aria-label="Zoom avant">
                  <svg width="20" height="20"><path d="M10 0v20M0 10h20" stroke="currentColor" strokeWidth="3" /></svg>
                </ZoomButton>
                <ZoomButton aria-label="Zoom arrière">
                  <svg width="20" height="20"><path d="M0 10h20" stroke="currentColor" strokeWidth="3" /></svg>
                </ZoomButton>
              </ZoomBox>
              <Attribution>
                <button type="button">Keyboard shortcuts</button>
                <span>Map data ©2025</span>
                <a href="#">Terms</a>
              </Attribution>
            </MapPane>
            <FormPane onSubmit={(e) => e.preventDefault()}>
              <SolidButton type="submit">Envoyer</SolidButton>
            </FormPane>
          </Split>

          <Footer>
            <FooterGrid>
              <About>
                <Logo />
                <AboutText>
                  Depuis 2015, nous construisons un cadre sécurisé et respectueux des normes QHSE pour le bonheur de nombreuses entreprises.
                </AboutText>
                <Highlight>Nous sommes situé à Cotonou, quartier Ste Rita, à côté de la station JNP, deuxième étage.</Highlight>
              </About>
              <LinkColumn $top={20}>
                <li><a href="#">L'entreprise</a></li>
                <li><a href="#">Politique de confidentialité</a></li>
                <li><a href="#">A propos</a></li>
              </LinkColumn>
              <div>
                <Heading>Resources</Heading>
                <LinkColumn $top={23}>
                  <li><a href="#">Contact</a></li>
                  <li><a href="#">Condition d'utilisations</a></li>
                </LinkColumn>
              </div>
              <div>
                <Heading>Newsletter</Heading>
                <Subscribe onSubmit={(e) => e.preventDefault()}>
                  <EmailInput type="email" aria-label="Votre adresse e-mail" placeholder="Votre adresse e-mail" />
                  <SolidButton $pill type="submit">S'abonner</SolidButton>
                </Subscribe>
              </div>
            </FooterGrid>
            <FooterEnd>
              <Social>
                <SocialLink href="#" aria-label="Facebook"><FaFacebookF size={20} /></SocialLink>
                <SocialLink href="#" aria-label="LinkedIn"><FaLinkedin size={22} /></SocialLink>
              </Social>
              <p>Designed by AFRICA SERVICES INTL</p>
            </FooterEnd>
          </Footer>
          <BackToTop aria-label="Haut de page"><BsChevronUp size={26} /></BackToTop>
        </Page>
        <ScrollTrack>
          <svg width="14" height="8"><path d="M0 8L7 0L14 8Z" fill="currentColor" /></svg>
          <ScrollEnd>
            <Thumb />
            <svg width="14" height="8"><path d="M0 0L7 8L14 0Z" fill="currentColor" /></svg>
          </ScrollEnd>
        </ScrollTrack>
      </Viewport>

      <Taskbar>
        <StartButton aria-label="Démarrer">
          <svg width="20" height="20" viewBox="0 0 20 20" fill="#fff"><path d="M0 3l8.500-1.200v7.700H0zM9.500 1.600L20 0v9.500H9.500zM0 10.500h8.500v7.700L0 17zM9.500 10.500H20V20L9.500 18.400z" /></svg>
        </StartButton>
        <SearchBox>
          <svg width="22" height="22" viewBox="0 0 22 22" fill="none" stroke="#222" strokeWidth="1.600"><circle cx="13.500" cy="8" r="6.800" /><path d="M8.700 13L1 20.500" /></svg>
          <SearchInput aria-label="Rechercher" placeholder="Taper ici pour rechercher" />
        </SearchBox>
        <TaskView aria-label="Affichage des tâches">
          <svg width="21" height="20" viewBox="0 0 21 20" fill="none" stroke="#fff" strokeWidth="1.200"><path d="M1 0v3h13V0M1 20v-3h13v3M1 6h13v8H1zM19 0v4M19 10v10" /><path d="M17.500 6h3v3h-3z" fill="#fff" stroke="none" /></svg>
        </TaskView>
        <Apps>
          {apps.map((a) => (
            <AppButton key={a.name} aria-label={a.name} $open={a.open} $many={a.many} $active={a.active}>{a.icon}</AppButton>
          ))}
        </Apps>
        <Tray>
          <TrayIcons>
            <svg width="22" height="20" viewBox="-2 0 22 20" fill="none" stroke="#fff" strokeWidth="1.400"><path d="M1 14l8-8 8 8" /></svg>
            <svg width="22" height="20" viewBox="0 0 22 20" fill="none" stroke="#fff" strokeWidth="1.400"><rect x="5" y="5" width="9" height="10" rx="2" /><path d="M14 9l4-2v6l-4-2M5 3q5-4 10 0M5 17q5 4 10 0" /></svg>
            <svg width="22" height="20" viewBox="0 0 22 20" fill="none" stroke="#fff" strokeWidth="1.400"><path d="M7 6h12v9H6v-4M20.500 9v3M2 2v3M5 2v3M1 5h5v3H1zM3.500 8v6H6" /><path d="M8 8h10v6H8z" fill="#fff" stroke="none" /></svg>
            <svg width="22" height="20" viewBox="-1 0 22 20" fill="none" stroke="#fff" strokeWidth="1.400"><path d="M3 18A14 14 0 0 1 17 4M7 18A10 10 0 0 1 17 8M11 18a6 6 0 0 1 6-6" /><path d="M1 14A16 16 0 0 1 14 1" stroke="#999" /><circle cx="16" cy="17" r="1.500" fill="#fff" stroke="none" /></svg>
            <svg width="22" height="20" viewBox="-1 0 22 20" fill="none" stroke="#fff" strokeWidth="1.400"><path d="M1 7h3l4-4v14l-4-4H1zM10.500 7q2 3 0 6M13.500 5q4 5 0 10" /><path d="M16 2q6 8 0 16" stroke="#888" /></svg>
          </TrayIcons>
          <Language>FRA</Language>
          <Clock>06:41<br />11/07/2025</Clock>
          <Notice aria-label="Notifications">
            <svg width="20" height="20" viewBox="0 0 20 20"><path d="M0 0h20v16h-7l-3 4-3-4H0z" fill="#fff" /><path d="M4 4h12M4 8h12M4 12h8" stroke="#2a2b1f" strokeWidth="1.400" /></svg>
          </Notice>
          <DesktopEdge />
        </Tray>
      </Taskbar>
    </Screen>
  );
}
